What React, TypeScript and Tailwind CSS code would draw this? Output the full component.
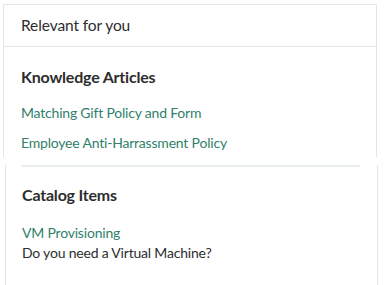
import React from "react";

const articles = ["Matching Gift Policy and Form", "Employee Anti-Harrassment Policy"];

function App() {
  return (
    <div className="w-[384px] h-[285px] bg-white pl-[3px] pt-[4px] text-[#2d2d2d]" style={{ fontFamily: "Lato, 'Open Sans', sans-serif" }}>
      {/* top card */}
      <div className="w-[374px] h-[153px] border-x border-t border-[#e3e6e9]">
        <div className="h-[42px] px-[17px] flex items-center border-b border-[#e3e6e9] text-[15.5px] tracking-[-0.1px]">
          Relevant for you
        </div>
        <div className="px-[17px] pt-[20px] flex flex-col">
          <div className="text-[16px] font-bold leading-[20px] tracking-[-0.2px]">Knowledge Articles</div>
          <div className="mt-[16px] flex flex-col gap-[10px]">
            {articles.map((a, i) => (
              <a key={i} href="#" className="text-[14px] leading-[20px] tracking-[-0.2px] text-[#2f7f6b]">
                {a}
              </a>
            ))}
          </div>
        </div>
      </div>

      {/* bottom card */}
      <div className="ml-[2px] w-[373px] h-[121px] border-x border-b border-[#e3e6e9] px-[16px]">
        <div className="mt-[8px] mr-[1px] h-[2px] bg-[#e8eeee]"></div>
        <div className="mt-[18px] text-[16px] font-bold leading-[20px] tracking-[-0.2px]">Catalog Items</div>
        <div className="mt-[18px] flex flex-col">
          <a href="#" className="text-[14px] leading-[20px] tracking-[-0.2px] text-[#2f7f6b]">VM Provisioning</a>
          <span className="text-[14px] leading-[20px] tracking-[-0.2px]">Do you need a Virtual Machine?</span>
        </div>
      </div>
    </div>
  );
}

export default App;
